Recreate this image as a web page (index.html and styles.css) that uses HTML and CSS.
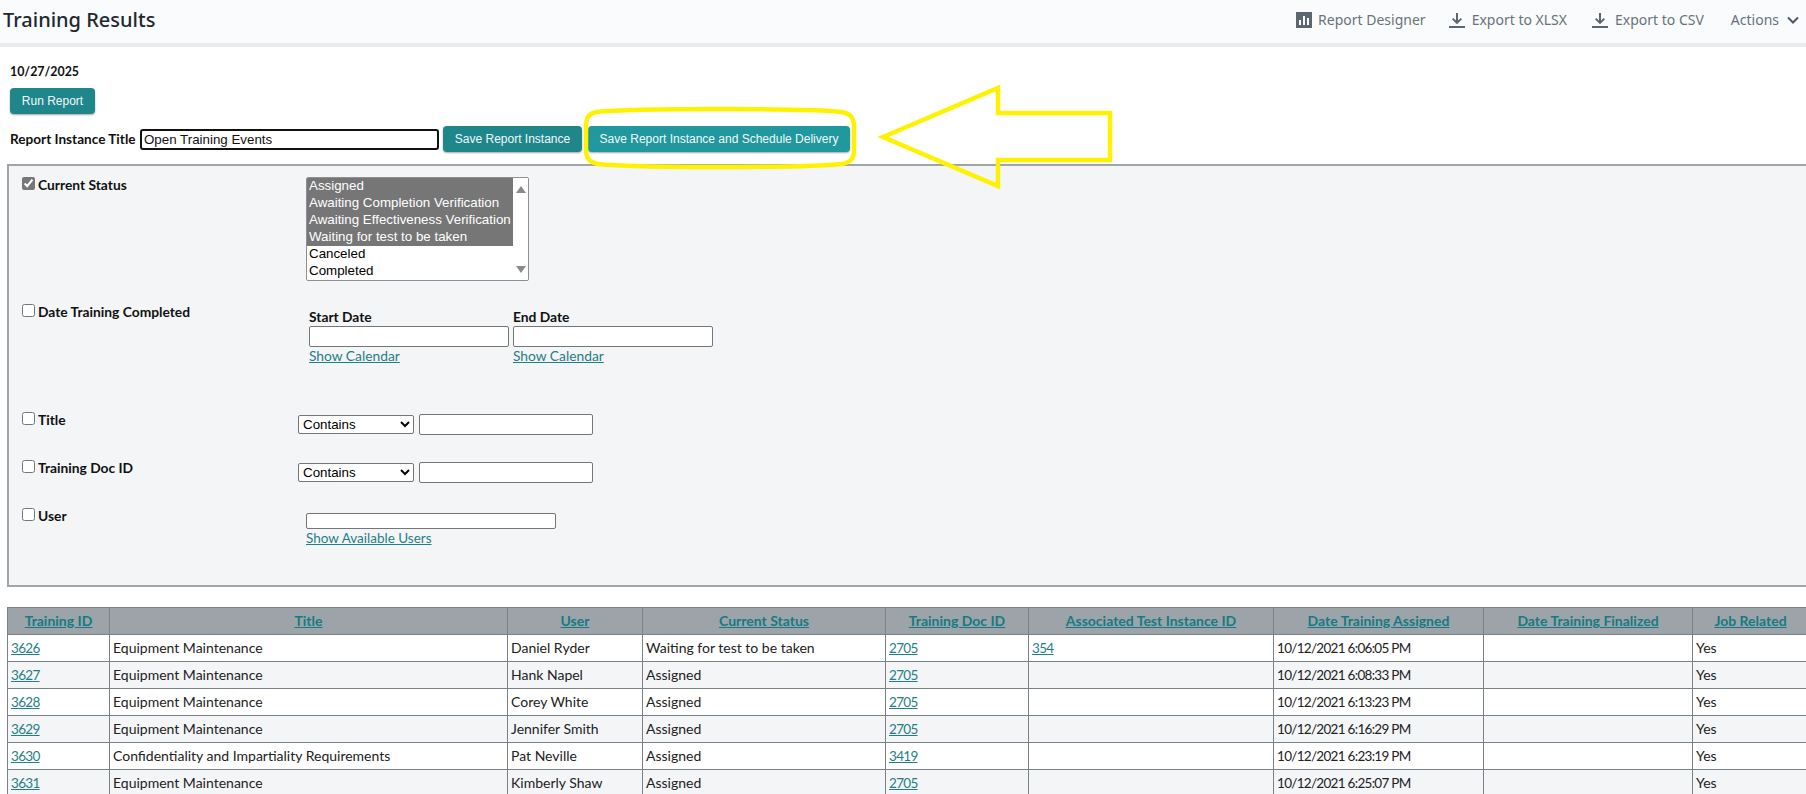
FILE: index.html
```html
<!DOCTYPE html>
<html lang="en">
<head>
<meta charset="utf-8">
<title>Training Results</title>
<link rel="stylesheet" href="styles.css">
</head>
<body>
<header class="topbar">
  <h1 class="page-title">Training Results</h1>
  <nav class="actions">
    <a class="action action-designer"><svg class="icon" viewBox="0 0 16 16"><path fill-rule="evenodd" d="M0 0h16v16H0zM3 8v5h2V8zM7 4v9h2V4zM11 6v7h2V6z"/></svg>Report Designer</a>
    <a class="action"><svg class="icon" viewBox="0 0 16 16"><path d="M7 1h2v7.6l2.7-2.7 1.3 1.3-5 5-5-5 1.3-1.3L7 8.6zM0 14h16v2H0z"/></svg>Export to XLSX</a>
    <a class="action"><svg class="icon" viewBox="0 0 16 16"><path d="M7 1h2v7.6l2.7-2.7 1.3 1.3-5 5-5-5 1.3-1.3L7 8.6zM0 14h16v2H0z"/></svg>Export to CSV</a>
    <a class="action action-menu">Actions<svg class="chevron" viewBox="0 0 12 8"><path d="M1 1.5l5 5 5-5" fill="none" stroke="currentColor" stroke-width="2"/></svg></a>
  </nav>
</header>
<main class="report">
  <div class="report-date">10/27/2025</div>
  <button class="btn btn-run" type="button">Run Report</button>
  <div class="instance-row">
    <label class="instance-label" for="instance">Report Instance Title</label>
    <input class="instance-input" id="instance" type="text" value="Open Training Events">
    <button class="btn btn-save" type="button">Save Report Instance</button>
    <button class="btn btn-schedule" type="button">Save Report Instance and Schedule Delivery</button>
  </div>
  <svg class="callout-ring" viewBox="0 0 272 62"><path d="M12 5C50 1 225 1 258 5 268 7 270 12 270 20L270 43C270 52 267 55 258 57 220 61 50 61 14 57 5 55 2 51 2 43L2 20C2 11 4 7 12 5Z"/></svg>
  <svg class="callout-arrow" viewBox="0 0 232 104"><path d="M3 52 118 3V28H230V75H118V101Z"/></svg>
  <section class="filters">
    <div class="filter filter-status">
      <label class="filter-label"><input type="checkbox" checked>Current Status</label>
      <div class="status-box">
        <select class="status-list" multiple size="6">
          <option selected>Assigned</option>
          <option selected>Awaiting Completion Verification</option>
          <option selected>Awaiting Effectiveness Verification</option>
          <option selected>Waiting for test to be taken</option>
          <option>Canceled</option>
          <option>Completed</option>
          <option>Effective</option>
          <option>Not Effective</option>
        </select>
        <span class="scroll-arrow scroll-up"></span>
        <span class="scroll-arrow scroll-down"></span>
      </div>
    </div>
    <div class="filter filter-date">
      <label class="filter-label"><input type="checkbox">Date Training Completed</label>
      <div class="date-fields">
        <div class="date-field"><span class="date-title">Start Date</span><input class="date-input" type="text"><a class="link">Show Calendar</a></div>
        <div class="date-field"><span class="date-title">End Date</span><input class="date-input" type="text"><a class="link">Show Calendar</a></div>
      </div>
    </div>
    <div class="filter filter-text">
      <label class="filter-label"><input type="checkbox">Title</label>
      <div class="text-fields"><select class="op-select"><option>Contains</option></select><input class="text-input" type="text"></div>
    </div>
    <div class="filter filter-text">
      <label class="filter-label"><input type="checkbox">Training Doc ID</label>
      <div class="text-fields"><select class="op-select"><option>Contains</option></select><input class="text-input" type="text"></div>
    </div>
    <div class="filter filter-user">
      <label class="filter-label"><input type="checkbox">User</label>
      <div class="user-field"><input class="user-input" type="text"><a class="link">Show Available Users</a></div>
    </div>
  </section>
  <table class="results">
    <colgroup>
      <col class="c1"><col class="c2"><col class="c3"><col class="c4"><col class="c5"><col class="c6"><col class="c7"><col class="c8"><col class="c9">
    </colgroup>
    <thead>
      <tr>
        <th><a>Training ID</a></th><th><a>Title</a></th><th><a>User</a></th><th><a>Current Status</a></th><th><a>Training Doc ID</a></th><th><a>Associated Test Instance ID</a></th><th><a>Date Training Assigned</a></th><th><a>Date Training Finalized</a></th><th><a>Job Related</a></th>
      </tr>
    </thead>
    <tbody>
      <tr><td class="num"><a>3626</a></td><td>Equipment Maintenance</td><td>Daniel Ryder</td><td>Waiting for test to be taken</td><td class="num"><a>2705</a></td><td class="num"><a>354</a></td><td class="num">10/12/2021 6:06:05 PM</td><td></td><td>Yes</td></tr>
      <tr><td class="num"><a>3627</a></td><td>Equipment Maintenance</td><td>Hank Napel</td><td>Assigned</td><td class="num"><a>2705</a></td><td></td><td class="num">10/12/2021 6:08:33 PM</td><td></td><td>Yes</td></tr>
      <tr><td class="num"><a>3628</a></td><td>Equipment Maintenance</td><td>Corey White</td><td>Assigned</td><td class="num"><a>2705</a></td><td></td><td class="num">10/12/2021 6:13:23 PM</td><td></td><td>Yes</td></tr>
      <tr><td class="num"><a>3629</a></td><td>Equipment Maintenance</td><td>Jennifer Smith</td><td>Assigned</td><td class="num"><a>2705</a></td><td></td><td class="num">10/12/2021 6:16:29 PM</td><td></td><td>Yes</td></tr>
      <tr><td class="num"><a>3630</a></td><td>Confidentiality and Impartiality Requirements</td><td>Pat Neville</td><td>Assigned</td><td class="num"><a>3419</a></td><td></td><td class="num">10/12/2021 6:23:19 PM</td><td></td><td>Yes</td></tr>
      <tr><td class="num"><a>3631</a></td><td>Equipment Maintenance</td><td>Kimberly Shaw</td><td>Assigned</td><td class="num"><a>2705</a></td><td></td><td class="num">10/12/2021 6:25:07 PM</td><td></td><td>Yes</td></tr>
    </tbody>
  </table>
</main>
</body>
</html>
```
FILE: styles.css
```css
* { box-sizing: border-box; }
html, body { margin: 0; height: 794px; overflow: hidden; background: #fff; }
body { font-family: Lato, "Liberation Sans", sans-serif; font-size: 13.8px; color: #111; }

.topbar { display: flex; align-items: center; justify-content: space-between; height: 47px; padding: 0 7px 4px 3px; background: #f9fbfd; border-bottom: 4px solid #e9ebee; }
.page-title { margin: 0; font-family: "Noto Sans", sans-serif; font-size: 20px; font-weight: 500; color: #23282e; }
.actions { display: flex; align-items: center; font-family: "Noto Sans", sans-serif; font-size: 14px; color: #69727c; }
.action { display: flex; align-items: center; margin-left: 25px; }
.action-designer + .action { margin-left: 23px; }
.action-menu { margin-left: 27px; }
.icon { width: 16px; height: 16px; margin-right: 7px; fill: #5d6570; }
.action-designer .icon { margin-right: 6px; }
.chevron { width: 12px; height: 8px; margin-left: 8px; color: #4f5760; }

.report { position: relative; padding: 17px 0 0 7px; }
.report-date { height: 15px; padding-left: 3px; font-weight: 700; font-size: 12.4px; line-height: 15px; color: #111; }
.btn { display: block; height: 26px; padding: 0; border: 0; border-radius: 4px; background: #1f868c; color: #f2fafa; font-family: "Liberation Sans", sans-serif; font-size: 12px; box-shadow: 0 1px 2px rgba(0, 0, 0, .35); }
.btn-run { width: 85px; margin: 9px 0 0 3px; }
.btn-save { width: 139px; margin-left: 4px; }
.btn-schedule { width: 262px; margin-left: 6px; background: #21979e; }

.instance-row { display: flex; align-items: center; height: 26px; margin-top: 12px; padding-left: 3px; }
.instance-label { width: 130px; font-weight: 700; font-size: 13.6px; white-space: nowrap; }
.instance-input { width: 299px; height: 21px; padding: 0 2px; border: 2px solid #111; border-radius: 3px; font-family: "Liberation Sans", sans-serif; font-size: 13.33px; color: #111; }

.callout-ring { position: absolute; left: 584px; top: 60px; width: 272px; height: 62px; overflow: visible; }
.callout-ring path, .callout-arrow path { fill: none; stroke: #fff200; stroke-width: 4.5; stroke-linejoin: miter; }
.callout-arrow { position: absolute; left: 880px; top: 38px; width: 232px; height: 104px; overflow: visible; }

.filters { height: 423px; margin-top: 12px; border: 2px solid #a1a4a9; border-right: 0; background: #f3f5f7; }
.filter { display: flex; padding-left: 13px; }
.filter-label { display: flex; align-items: flex-start; font-weight: 700; line-height: 16px; width: 284px; flex: none; }
.filter-label input { width: 13px; height: 13px; margin: 0 3px 0 0; accent-color: #777; }
.filter-status { height: 138px; padding-top: 11px; }
.status-box { position: relative; width: 223px; height: 104px; }
.status-list { display: block; width: 223px; height: 104px; padding: 0; margin: 0; border: 1px solid #8f8f8f; border-radius: 2px; background: #fff; font-family: "Liberation Sans", sans-serif; font-size: 13.33px; color: #000; }
.status-list option { width: 206px; min-height: 17px; height: 17px; line-height: 17px; padding: 0 2px; }
.status-list option:checked { background: linear-gradient(#767676, #767676); color: #fff; }
.scroll-arrow { position: absolute; right: 3px; width: 0; height: 0; border-left: 5px solid transparent; border-right: 5px solid transparent; }
.scroll-up { top: 9px; border-bottom: 7px solid #8a8a8a; }
.scroll-down { bottom: 8px; border-top: 7px solid #8a8a8a; }
.filter-date { height: 108px; }
.date-fields { display: flex; gap: 4px; padding: 4px 0 0 3px; }
.date-field { display: flex; flex-direction: column; width: 200px; }
.date-title { height: 18px; line-height: 17px; font-weight: 700; }
.date-input { width: 200px; height: 21px; border: 1px solid #767676; border-radius: 2px; background: #fff; }
.link { color: #1f7f85; text-decoration: underline; }
.date-field .link { margin-top: 1px; line-height: 16px; }
.filter-text { height: 48px; }
.text-fields { display: flex; gap: 5px; align-items: center; height: 21px; margin: 2px 0 0 -8px; }
.op-select { width: 116px; height: 19px; padding: 0; border: 1px solid #767676; border-radius: 2px; background: #fff; font-family: "Liberation Sans", sans-serif; font-size: 13.33px; color: #000; }
.text-input { width: 174px; height: 21px; border: 1px solid #767676; border-radius: 2px; background: #fff; }
.user-field { display: flex; flex-direction: column; padding-top: 5px; }
.user-input { width: 250px; height: 16px; border: 1px solid #767676; border-radius: 2px; background: #fff; }
.user-field .link { margin-top: 1px; line-height: 16px; font-size: 13.5px; }

.results { width: 1801px; margin-top: 20px; border-collapse: collapse; table-layout: fixed; font-size: 14px; }
.c1 { width: 102px; } .c2 { width: 398px; } .c3 { width: 135px; } .c4 { width: 243px; } .c5 { width: 143px; } .c6 { width: 245px; } .c7 { width: 210px; } .c8 { width: 209px; } .c9 { width: 116px; }
.results th, .results td { height: 27px; padding: 0 3px; border: 1px solid #7a8288; line-height: 16px; white-space: nowrap; overflow: hidden; }
.results th { background: #9ca4aa; text-align: center; font-weight: 700; }
.results td { color: #222; font-weight: 400; }
.results td.num { font-size: 13.5px; letter-spacing: -.7px; }
.results a { color: #1f7f85; text-decoration: underline; }
.results th a { color: #167a80; }
.results tbody tr:nth-child(even) td { background: #f3f5f7; }
```
